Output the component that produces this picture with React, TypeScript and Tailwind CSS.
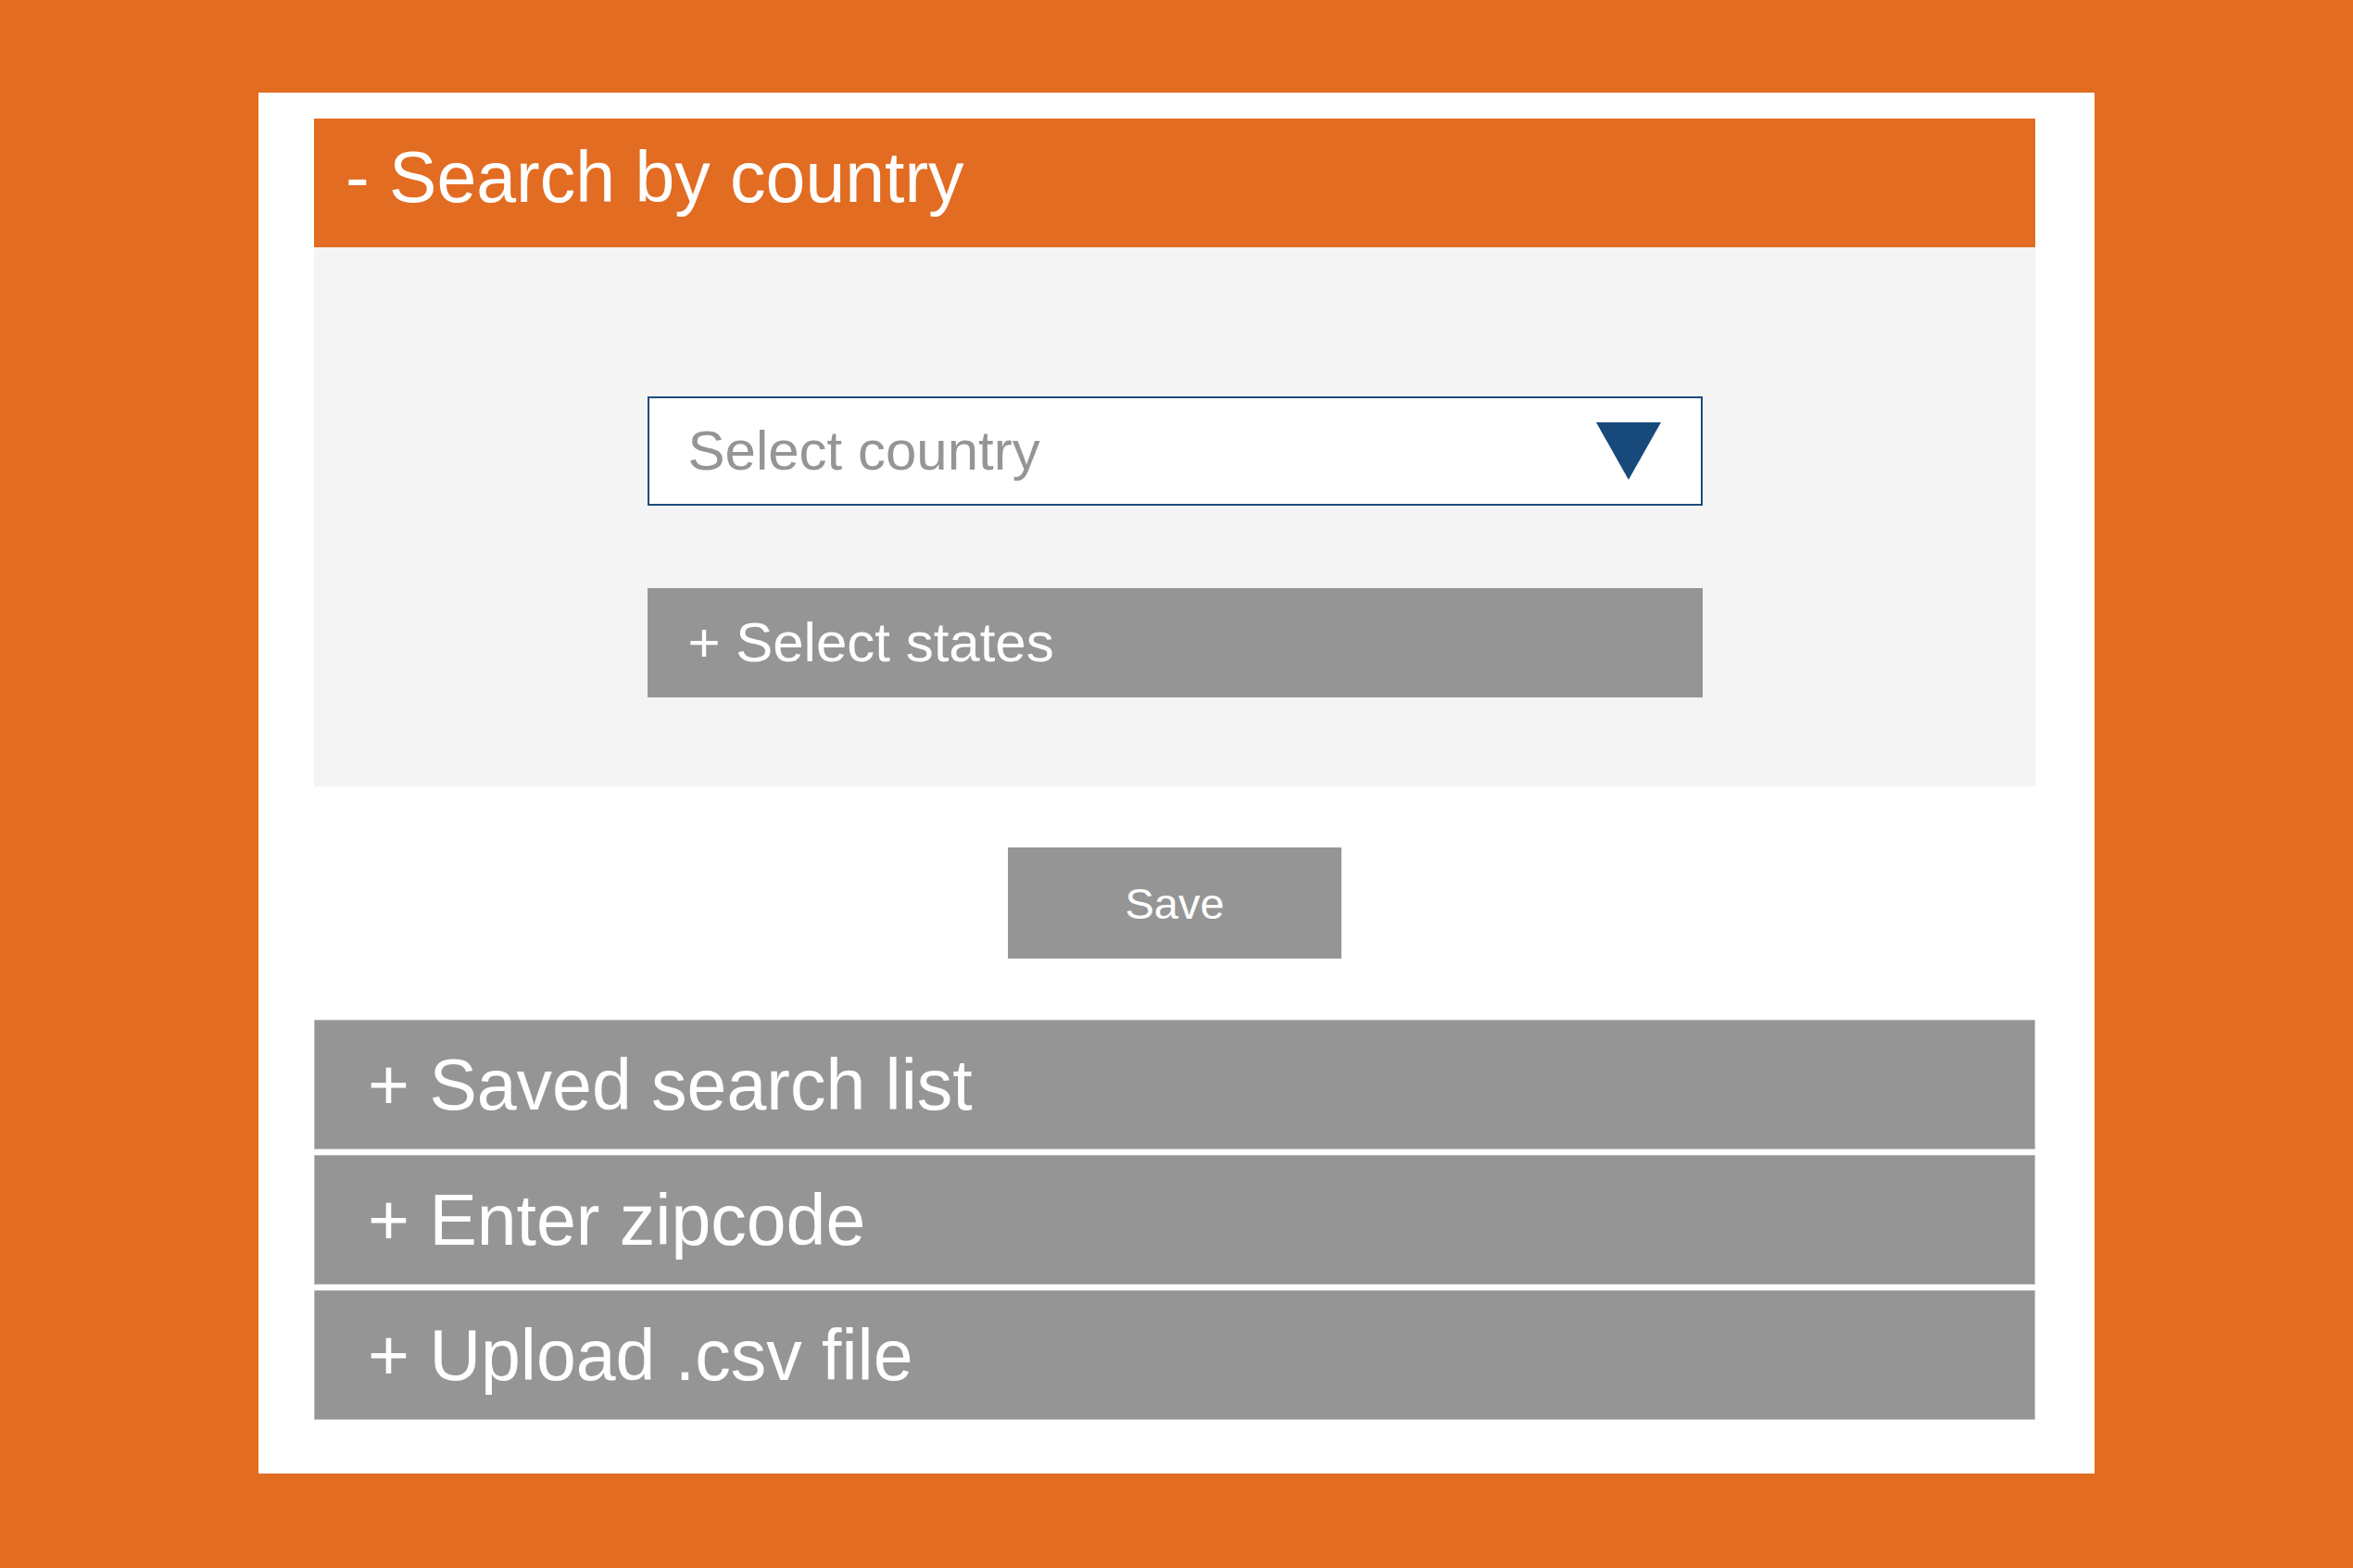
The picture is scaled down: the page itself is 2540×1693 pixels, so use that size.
import React from 'react';

const font = { fontFamily: '"Liberation Sans", Arial, sans-serif' };

const sections = ['Saved search list', 'Enter zipcode', 'Upload .csv file'];

function AccordionBar({ label }: { label: string }) {
  return (
    <div className="h-[140px] bg-[#959595] border border-[#b9b9b9] flex items-center pl-[57px]">
      <span className="text-white text-[77px] leading-none whitespace-nowrap">+ {label}</span>
    </div>
  );
}

export default function App() {
  return (
    <div className="w-[2540px] h-[1693px] bg-[#e16c22] flex items-start pt-[100px] pl-[279px]" style={font}>
      <div className="w-[1982px] h-[1491px] bg-white pt-[28px] pl-[60px] pr-[64px] flex flex-col">
        {/* expanded section */}
        <div className="h-[139px] bg-[#e16c22] flex items-center pl-[34px] pb-[12px]">
          <span className="text-white text-[77px] leading-none whitespace-nowrap">- Search by country</span>
        </div>
        <div className="h-[582px] bg-[#f5f4f5] flex flex-col items-center pt-[161px]">
          <div className="w-[1139px] h-[118px] bg-white border-2 border-[#1c4b7c] flex items-center justify-between pl-[42px] pr-[43px]">
            <span className="text-[#959595] text-[60px] leading-none whitespace-nowrap">Select country</span>
            <svg width="70" height="62" viewBox="0 0 70 62">
              <polygon points="0,0 70,0 35,62" fill="#174a7b" />
            </svg>
          </div>
          <div className="mt-[89px] w-[1139px] h-[118px] bg-[#959595] flex items-center pl-[44px]">
            <span className="text-white text-[60px] leading-none whitespace-nowrap">+ Select states</span>
          </div>
        </div>

        <div className="flex justify-center pt-[66px] pb-[66px]">
          <button className="w-[360px] h-[120px] bg-[#959595] flex items-center justify-center">
            <span className="text-white text-[47px] leading-none">Save</span>
          </button>
        </div>

        <div className="flex flex-col gap-[6px]">
          {sections.map((s) => (
            <AccordionBar key={s} label={s} />
          ))}
        </div>
      </div>
    </div>
  );
}
